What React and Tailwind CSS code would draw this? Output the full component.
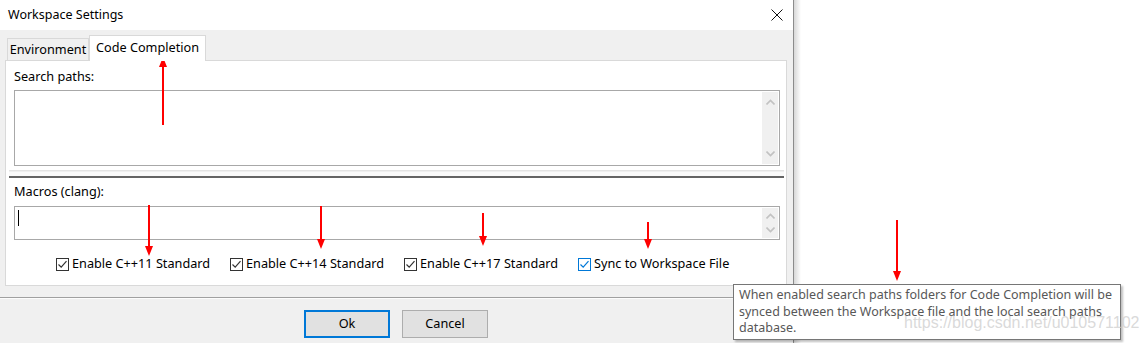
import React from 'react';

const Chevron = ({ up }) => (
  <svg width="9" height="6" viewBox="0 0 9 6" className="block">
    <path d={up ? 'M0.5 5.5 L4.5 1.5 L8.5 5.5' : 'M0.5 0.5 L4.5 4.5 L8.5 0.5'} fill="none" stroke="#c2c2c2" strokeWidth="1.6" />
  </svg>
);

const Checkbox = ({ label, hover }) => (
  <div className="w-[174px] shrink-0 flex items-center gap-[3px]">
    <div className={`w-[13px] h-[13px] border bg-white flex items-center justify-center ${hover ? 'border-[#0078d7]' : 'border-[#333333]'}`}>
      <svg width="11" height="11" viewBox="0 0 11 11">
        <path d="M1.5 5.5 L4.2 8.2 L9.5 2.2" fill="none" stroke={hover ? '#0078d7' : '#333333'} strokeWidth="1.2" />
      </svg>
    </div>
    <span className="whitespace-nowrap">{label}</span>
  </div>
);

const Arrow = ({ x, y1, y2, up }) => {
  const tip = up ? y1 : y2;
  const base = up ? y1 + 10 : y2 - 10;
  return (
    <g>
      <line x1={x} y1={up ? y1 + 6 : y1} x2={x} y2={up ? y2 : y2 - 6} stroke="#ff0000" strokeWidth="2" />
      <polygon points={`${x - 4},${base} ${x + 4},${base} ${x},${tip}`} fill="#ff0000" />
    </g>
  );
};

export default function App() {
  return (
    <div className="relative w-[1147px] h-[343px] overflow-hidden bg-white flex font-['Noto_Sans',sans-serif] text-[12.7px] text-black">
      {/* dialog */}
      <div className="w-[794px] h-full flex flex-col border-r border-[#8c8c8c] shrink-0">
        <div className="h-[30px] bg-white flex items-center justify-between pl-[8px] pr-[10px]">
          <span className="text-[12.5px]">Workspace Settings</span>
          <svg width="12" height="12" viewBox="0 0 12 12">
            <path d="M0.5 0.5 L11.5 11.5 M11.5 0.5 L0.5 11.5" stroke="#111" strokeWidth="1" />
          </svg>
        </div>

        <div className="flex-1 bg-[#f0f0f0] pt-[5px] pl-[5px] pr-[6px] flex flex-col">
          {/* tabs */}
          <div className="flex items-end pl-[2px] h-[25px] relative z-10">
            <div className="w-[82px] h-[22px] border border-b-0 border-[#d9d9d9] bg-[#f0f0f0] flex items-center justify-center whitespace-nowrap">Environment</div>
            <div className="w-[117px] h-[26px] mb-[-1px] border border-b-0 border-[#d9d9d9] bg-white flex items-center justify-center pb-[2px] whitespace-nowrap">Code Completion</div>
          </div>

          {/* panel */}
          <div className="w-[782px] h-[226px] border border-[#d9d9d9] bg-white flex flex-col">
            <div className="pl-[8px] pr-[6px]">
              <div className="h-[16px] mt-[7px] leading-[16px]">Search paths:</div>
              <div className="mt-[6px] h-[76px] border border-[#a8a8a8] flex justify-end p-[1px]">
                <div className="w-[16px] bg-[#f0f0f0] flex flex-col items-center justify-between py-[7px]">
                  <Chevron up />
                  <Chevron />
                </div>
              </div>
            </div>

            {/* splitter */}
            <div className="mt-[4px] ml-[3px] mr-[2px]">
              <div className="h-[1px] bg-[#e3e3e3]" />
              <div className="h-[1px] bg-[#efefef]" />
              <div className="h-[4px] bg-[#fafafa]" />
              <div className="h-[2px] bg-[#646464]" />
            </div>

            <div className="pl-[8px] pr-[6px]">
              <div className="h-[16px] mt-[5px] leading-[16px]">Macros (clang):</div>
              <div className="mt-[7px] h-[34px] border border-[#a8a8a8] flex justify-between p-[1px]">
                <div className="w-[1px] h-[16px] bg-black ml-[2px] mt-[2px]" />
                <div className="w-[16px] bg-[#f0f0f0] flex flex-col items-center justify-between py-[5px]">
                  <Chevron up />
                  <Chevron />
                </div>
              </div>
            </div>

            <div className="flex pl-[50px] mt-[16px] h-[16px] items-center">
              <Checkbox label="Enable C++11 Standard" />
              <Checkbox label="Enable C++14 Standard" />
              <Checkbox label="Enable C++17 Standard" />
              <Checkbox label="Sync to Workspace File" hover />
            </div>
          </div>

          {/* footer */}
          <div className="mt-[11px] -ml-[5px] -mr-[6px] h-[1px] bg-[#a0a0a0]" />
          <div className="h-[1px] -ml-[5px] -mr-[6px] bg-[#fcfcfc]" />
          <div className="flex pl-[299px] gap-[12px] mt-[11px]">
            <button className="w-[86px] h-[28px] border-2 border-[#0078d7] bg-[#e1e1e1] flex items-center justify-center">Ok</button>
            <button className="w-[86px] h-[28px] border border-[#adadad] bg-[#e1e1e1] flex items-center justify-center">Cancel</button>
          </div>
        </div>
      </div>
      <div className="w-[7px] h-full bg-gradient-to-r from-[#d8d8d8] to-white" />

      {/* tooltip */}
      <div className="absolute left-[733px] top-[284px] w-[388px] h-[56px] border border-[#767676] bg-white shadow-[2px_2px_2px_rgba(0,0,0,0.25)] px-[5px] pt-[2px] text-[#575757] text-[12.5px] leading-[16.5px]">
        When enabled search paths folders for Code Completion will be synced between the Workspace file and the local search paths database.
      </div>

      {/* watermark */}
      <div className="absolute left-[904px] top-[314px] text-[16px] leading-[18px] font-['Liberation_Sans',sans-serif] text-[#d0d0d0]/80 whitespace-nowrap">
        https://blog.csdn.net/u010571102
      </div>

      {/* annotations */}
      <svg className="absolute inset-0 pointer-events-none" width="1147" height="343">
        <Arrow x={163} y1={57} y2={125} up />
        <Arrow x={149} y1={205} y2={256} />
        <Arrow x={321} y1={206} y2={249} />
        <Arrow x={483} y1={213} y2={246} />
        <Arrow x={648} y1={222} y2={249} />
        <Arrow x={897} y1={220} y2={281} />
      </svg>
    </div>
  );
}
